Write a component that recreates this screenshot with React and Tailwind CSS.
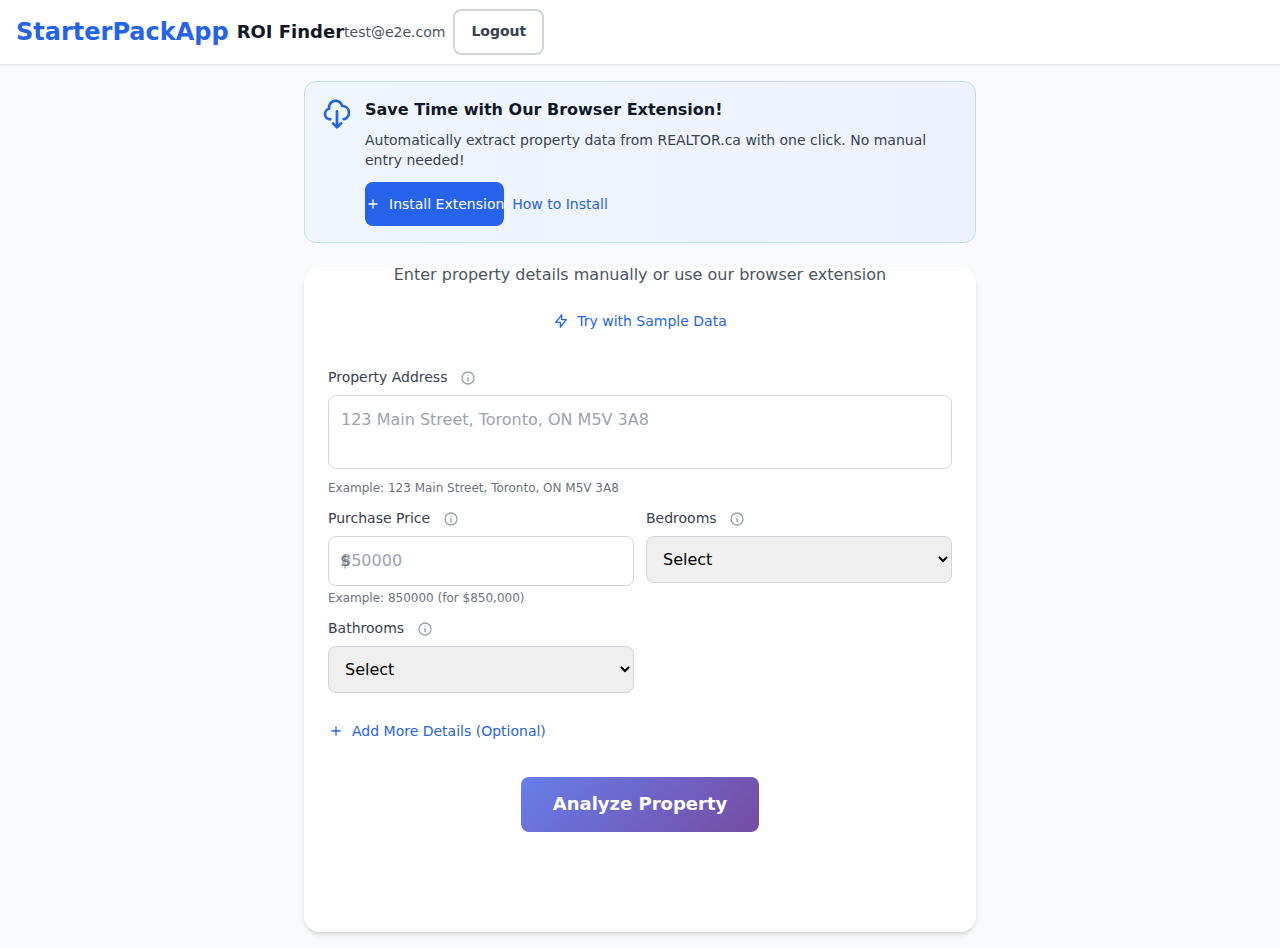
import React from "react";

function StrokeIcon({ d, className, strokeWidth = 2 }) {
  return (
    <svg className={className} fill="none" stroke="currentColor" viewBox="0 0 24 24" aria-hidden="true">
      <path strokeLinecap="round" strokeLinejoin="round" strokeWidth={strokeWidth} d={d} />
    </svg>
  );
}

const PLUS = "M12 6v6m0 0v6m0-6h6m-6 0H6";
const CLOUD_DOWNLOAD =
  "M7 16a4 4 0 01-.88-7.903A5 5 0 1115.9 6L16 6a5 5 0 011 9.9M9 19l3 3m0 0l3-3m-3 3V10";
const BOLT = "M13 10V3L4 14h7v7l9-11h-7z";
const INFO = "M13 16h-1v-4h-1m1-4h.01M21 12a9 9 0 11-18 0 9 9 0 0118 0z";

function FieldLabel({ children, htmlFor }) {
  return (
    <div className="mb-2 flex h-5 items-center text-sm text-[#374151]">
      <label htmlFor={htmlFor}>{children}</label>
      <StrokeIcon d={INFO} className="mt-0.5 ml-[12.45px] h-4 w-4 text-[#9ca3af]" />
    </div>
  );
}

function SelectField({ id, label }) {
  return (
    <div>
      <FieldLabel htmlFor={id}>{label}</FieldLabel>
      <select
        id={id}
        className="block h-[47px] w-full rounded-lg border border-[#d1d5db] bg-[#efefef] px-3 text-base text-black"
      >
        <option>Select</option>
      </select>
    </div>
  );
}

function Header() {
  return (
    <header className="flex h-[65px] items-center border-b border-[#e5e7eb] bg-white px-4 shadow-[0_1px_2px_0_rgba(0,0,0,0.05)]">
      <span className="mr-2 text-2xl font-bold text-[#2563eb]">StarterPackApp</span>
      <h1 className="text-lg font-semibold text-[#111827]">ROI Finder</h1>
      <span className="mr-2 text-sm text-[#4b5563]">test@e2e.com</span>
      <button className="h-[46px] rounded-lg border-2 border-[#d1d5db] bg-white px-4 pb-0.5 text-sm font-semibold text-[#374151]">
        Logout
      </button>
    </header>
  );
}

function ExtensionBanner() {
  return (
    <section className="flex h-[162px] items-start rounded-xl border border-[#bfdbfe] bg-linear-to-r/srgb from-[#eff6ff] to-[#eef2ff] p-4">
      <StrokeIcon d={CLOUD_DOWNLOAD} className="mr-3 h-8 w-8 shrink-0 text-[#2563eb]" />
      <div className="flex-1">
        <h3 className="mb-2 text-base leading-6 font-semibold text-[#111827]">
          Save Time with Our Browser Extension!
        </h3>
        <p className="mb-3 text-sm text-[#374151]">
          Automatically extract property data from REALTOR.ca with one click. No manual entry needed!
        </p>
        <div className="flex items-center gap-2 text-sm">
          <button className="flex h-11 w-[139.2px] items-center rounded-lg bg-[#2563eb] whitespace-nowrap text-white">
            <StrokeIcon d={PLUS} className="mr-2 h-4 w-4 shrink-0" />
            Install Extension
          </button>
          <button className="text-[#2563eb]">How to Install</button>
        </div>
      </div>
    </section>
  );
}

function PropertyForm() {
  return (
    <section className="mt-6 flow-root h-[665px] rounded-2xl bg-white px-6 shadow-[0_4px_6px_-1px_rgba(0,0,0,0.1),0_2px_4px_-2px_rgba(0,0,0,0.1)]">
      <p className="-mt-1 mb-3 text-center text-base leading-6 text-[#4b5563]">
        Enter property details manually or use our browser extension
      </p>
      <button className="mx-auto flex h-11 items-center text-sm text-[#2563eb]">
        <StrokeIcon d={BOLT} className="mr-2 h-4 w-4" />
        Try with Sample Data
      </button>

      <form className="mt-6" onSubmit={(e) => e.preventDefault()}>
        <FieldLabel htmlFor="address">Property Address</FieldLabel>
        <textarea
          id="address"
          placeholder="123 Main Street, Toronto, ON M5V 3A8"
          className="block h-[74px] w-full resize-none rounded-lg border border-[#d1d5db] px-3 py-3 text-base placeholder:text-[#9ca3af]"
        />
        <p className="mt-[11px] text-xs text-[#6b7280]">Example: 123 Main Street, Toronto, ON M5V 3A8</p>

        <div className="mt-3 grid grid-cols-2 gap-3">
          <div>
            <FieldLabel htmlFor="price">Purchase Price</FieldLabel>
            <div className="relative">
              <input
                id="price"
                placeholder="850000"
                className="block h-[50px] w-full rounded-lg border border-[#d1d5db] px-3 pb-0.5 text-base placeholder:text-[#9ca3af]"
              />
              <span className="absolute top-[13px] left-3 text-base text-[#6b7280]">$</span>
            </div>
            <p className="mt-1 text-xs text-[#6b7280]">Example: 850000 (for $850,000)</p>
          </div>
          <SelectField id="bedrooms" label="Bedrooms" />
          <SelectField id="bathrooms" label="Bathrooms" />
        </div>

        <button type="button" className="mt-4 flex h-11 items-center text-sm text-[#2563eb]">
          <StrokeIcon d={PLUS} className="mr-2 h-4 w-4" />
          Add More Details (Optional)
        </button>
        <button
          type="submit"
          className="mx-auto mt-6 block h-[55px] w-[238px] rounded-lg bg-[linear-gradient(135deg,#667eea_0%,#764ba2_100%)] pb-0.5 text-lg font-semibold text-white"
        >
          Analyze Property
        </button>
      </form>
    </section>
  );
}

export default function App() {
  return (
    <div className="h-[948px] overflow-hidden bg-[#f9fafb] font-['DejaVu_Sans',sans-serif]">
      <Header />
      <main className="mx-auto w-[672px] pt-4">
        <ExtensionBanner />
        <PropertyForm />
      </main>
    </div>
  );
}
